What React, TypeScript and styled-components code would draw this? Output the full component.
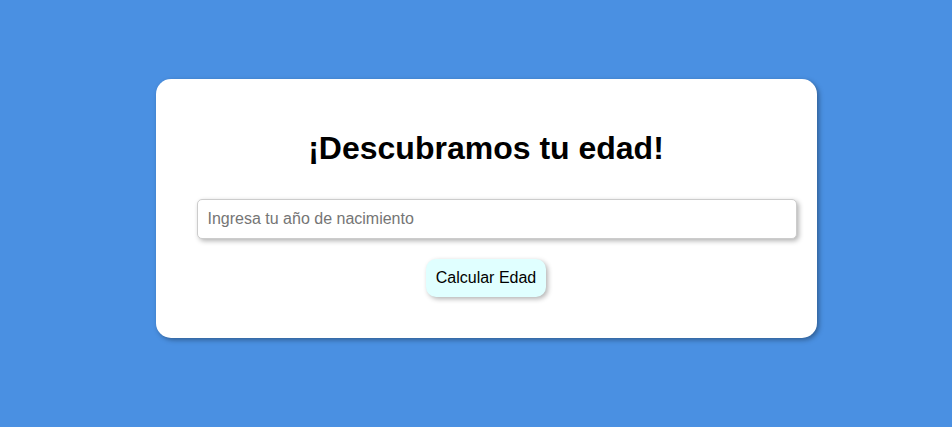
import React from "react";
import styled, { createGlobalStyle } from "styled-components";

const GlobalStyle = createGlobalStyle`
  html, body {
    margin: 0;
    padding: 0;
    background: #4a90e2;
    font-family: "Liberation Sans", Arial, sans-serif;
  }
`;

const Page = styled.main`
  display: flex;
  justify-content: center;
  align-items: flex-start;
  min-height: 427px;
  padding: 79px 0 0 20px;
  box-sizing: border-box;
`;

const Card = styled.section`
  width: 581px;
  padding: 30px 40px;
  background: #ffffff;
  border-radius: 15px;
  box-shadow: 2px 2px 5px rgba(0, 0, 0, 0.35);
  display: flex;
  flex-direction: column;
  align-items: center;
`;

const Title = styled.h1`
  margin: 21px 0;
  font-size: 32px;
  font-weight: bold;
  color: #000;
  text-align: center;
`;

const YearInput = styled.input`
  align-self: flex-start;
  width: calc(100% - 3px);
  margin: 11px 0 20px 1px;
  padding: 10px;
  font-family: "Liberation Sans", Arial, sans-serif;
  font-size: 16px;
  line-height: 18px;
  border: 1px solid #ccc;
  border-radius: 5px;
  box-shadow: 2px 2px 5px rgba(0, 0, 0, 0.3);
  outline: none;

  &::placeholder {
    color: #757575;
  }
`;

const CalcButton = styled.button`
  margin-bottom: 11px;
  padding: 10px;
  font-family: "Liberation Sans", Arial, sans-serif;
  font-size: 16px;
  line-height: 18px;
  color: #000;
  background: #e0ffff;
  border: none;
  border-radius: 10px;
  box-shadow: 2px 2px 5px rgba(0, 0, 0, 0.3);
  cursor: pointer;
`;

const App: React.FC = () => (
  <>
    <GlobalStyle />
    <Page>
      <Card>
        <Title>¡Descubramos tu edad!</Title>
        <YearInput type="text" placeholder="Ingresa tu año de nacimiento" />
        <CalcButton>Calcular Edad</CalcButton>
      </Card>
    </Page>
  </>
);

export default App;
